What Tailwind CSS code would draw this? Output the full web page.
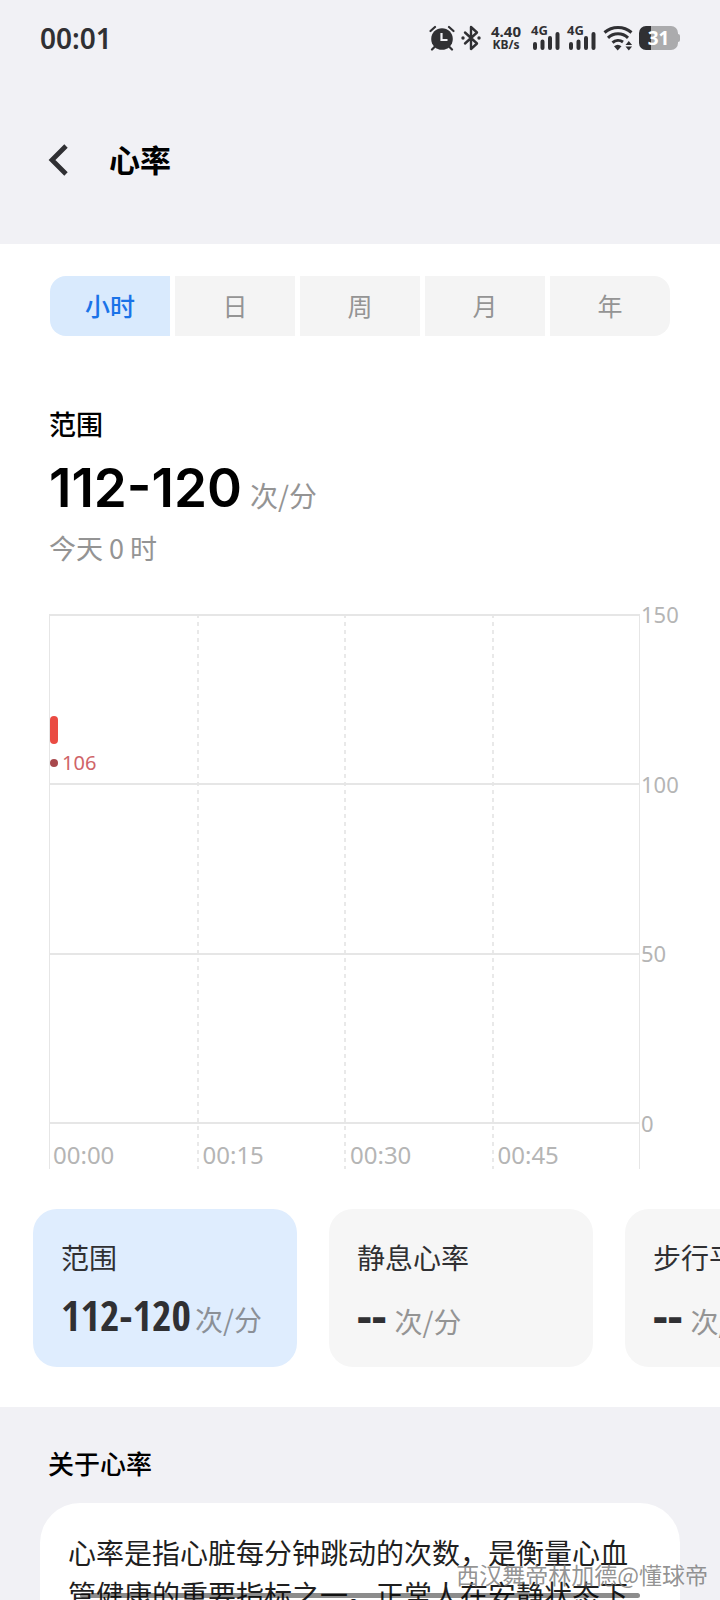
<!DOCTYPE html>
<html lang="zh-CN">
<head>
<meta charset="utf-8">
<title>心率</title>
<meta name="viewport" content="width=device-width, initial-scale=1">
<script src="https://cdn.jsdelivr.net/npm/@tailwindcss/browser@4"></script>
</head>
<body class="bg-white font-['Noto_Sans_CJK_SC',sans-serif] text-black">
<div class="relative flex h-screen flex-col overflow-hidden">

  <header class="shrink-0 bg-[#f1f1f5] text-[#303033]">
    <!-- Status bar -->
    <div class="flex h-[76px] items-center justify-between px-10 font-['Noto_Sans',sans-serif]">
      <time class="text-[28px] leading-8 font-semibold">00:01</time>
      <div class="flex items-center">
        <svg class="h-7 w-[26px]" viewBox="0 0 26 28" role="img" aria-label="闹钟">
          <circle cx="13" cy="15" r="10.800" fill="currentColor"/>
          <path d="M1.500 7 6 3M24.500 7 20 3M5.500 23l-2.500 2.500M20.500 23l2.500 2.500" stroke="currentColor" stroke-width="2.200" stroke-linecap="round" fill="none"/>
          <path d="M12.500 9v7h6" stroke="#f1f1f5" stroke-width="2.200" fill="none"/>
        </svg>
        <svg class="ml-1.5 h-7 w-5" viewBox="0 0 20 28" role="img" aria-label="蓝牙">
          <path d="M4 8.500l12 11-6 5.500V3l6 5.500-12 11" stroke="currentColor" stroke-width="2.400" stroke-linejoin="round" stroke-linecap="round" fill="none"/>
          <circle cx="2" cy="14" r="1.700" fill="currentColor"/><circle cx="18" cy="14" r="1.700" fill="currentColor"/>
        </svg>
        <div class="ml-2.5 flex flex-col items-center leading-[14px] font-bold"><span class="text-[15px]">4.40</span><span class="text-[12px]">KB/s</span></div>
        <svg class="ml-2.5 h-7 w-[29px] overflow-visible" viewBox="0 0 29 28" role="img" aria-label="4G 信号">
          <text x="0" y="11" font-size="13" font-weight="700" fill="currentColor">4G</text>
          <path d="M4 20v4M11.500 17.500v6.500M19 14v10M26.500 10v14" stroke="currentColor" stroke-width="4" stroke-linecap="round"/>
        </svg>
        <svg class="ml-[7px] h-7 w-[29px] overflow-visible" viewBox="0 0 29 28" role="img" aria-label="4G 信号">
          <text x="0" y="11" font-size="13" font-weight="700" fill="currentColor">4G</text>
          <path d="M4 20v4M11.500 17.500v6.500M19 14v10M26.500 10v14" stroke="currentColor" stroke-width="4" stroke-linecap="round"/>
        </svg>
        <svg class="ml-[7px] h-7 w-[30px]" viewBox="0 0 30 28" role="img" aria-label="无线网络">
          <path d="M1.500 8.500a20.500 20.500 0 0 1 27 0M5 13.800a14.500 14.500 0 0 1 20 0M9.500 18.600a8.500 8.500 0 0 1 10.500-.6" stroke="currentColor" stroke-width="3" fill="none"/>
          <path d="M11 22.200a6 6 0 0 1 7.500 0L14.700 26.500z" fill="currentColor"/>
          <path d="M22.500 21l3.300-4 3.300 4zM22.500 22.500l3.300 4 3.300-4z" fill="currentColor"/>
        </svg>
        <div class="ml-1.5 flex items-center" role="img" aria-label="电量 31%">
          <div class="flex h-6 w-[39px] items-center justify-center rounded-[7px] bg-linear-to-r from-[#303033] from-31% to-[#ababad] to-31% text-[19px] leading-6 font-bold text-white">31</div>
          <div class="h-2 w-0.5 rounded-r-full bg-[#ababad]"></div>
        </div>
      </div>
    </div>
    <!-- Title bar -->
    <div class="flex h-[168px] items-center gap-10 px-12">
      <button type="button" aria-label="返回" class="flex h-8 w-5 items-center justify-center">
        <svg class="h-8 w-5" viewBox="0 0 20 32" aria-hidden="true"><path d="M18 2 4 16l14 14" stroke="currentColor" stroke-width="4.800" fill="none"/></svg>
      </button>
      <h1 class="pb-0.5 pl-px text-[31px] leading-10 font-bold text-black">心率</h1>
    </div>
  </header>

  <main class="shrink-0">
    <nav class="mx-[50px] mt-8 grid grid-cols-5 gap-[5px] overflow-hidden rounded-2xl text-[25px] leading-8 text-[#949494]" aria-label="时间范围">
      <button type="button" aria-pressed="true" class="h-15 bg-[#d9eafd] pb-0.5 font-medium text-[#1a73e8]">小时</button>
      <button type="button" class="h-15 bg-[#f4f4f4] pb-0.5">日</button>
      <button type="button" class="h-15 bg-[#f4f4f4] pb-0.5">周</button>
      <button type="button" class="h-15 bg-[#f4f4f4] pb-0.5">月</button>
      <button type="button" class="h-15 bg-[#f4f4f4] pb-0.5">年</button>
    </nav>

    <section class="mt-[72px] px-[49px]">
      <h2 class="text-[27px] leading-8 font-medium">范围</h2>
      <p class="mt-4 flex items-baseline gap-2">
        <span class="font-['Inter',sans-serif] text-[53px] leading-16 font-semibold">112-120</span>
        <span class="text-[28px] leading-8 text-[#949494]">次/分</span>
      </p>
      <p class="mt-3 text-[27px] leading-8 text-[#949494]">今天 0 时</p>
    </section>

    <!-- Heart-rate chart, 0 to 150 -->
    <section class="mt-[50px] mr-10 ml-[49px] flex font-['Noto_Sans',sans-serif] text-[24px] leading-6 text-[#b5b5b5]" aria-label="心率图表">
      <div class="relative h-[555px] flex-1 border-x border-[#e6e6e6]">
        <div class="absolute inset-x-0 top-0 flex h-[510px] flex-col border-y-2 border-[#e6e6e6]">
          <div class="flex-1 border-b-2 border-[#e6e6e6]"></div>
          <div class="flex-1 border-b-2 border-[#e6e6e6]"></div>
          <div class="flex-1"></div>
        </div>
        <div class="-ml-px grid h-full grid-cols-4">
          <div class="flex items-end pb-0.5 pl-1">00:00</div>
          <div class="flex items-end bg-[repeating-linear-gradient(#e9e9e9_0_4px,transparent_4px_8px)] bg-[length:2px_100%] bg-no-repeat pb-0.5 pl-1.5">00:15</div>
          <div class="flex items-end bg-[repeating-linear-gradient(#e9e9e9_0_4px,transparent_4px_8px)] bg-[length:2px_100%] bg-no-repeat pb-0.5 pl-1.5">00:30</div>
          <div class="flex items-end bg-[repeating-linear-gradient(#e9e9e9_0_4px,transparent_4px_8px)] bg-[length:2px_100%] bg-no-repeat pb-0.5 pl-1.5">00:45</div>
        </div>
        <div class="absolute top-[102px] left-0 h-7 w-2 rounded-full bg-[#ea4b43]"></div>
        <div class="absolute top-[137px] left-0 flex items-center gap-1 text-[20px] text-[#cf6468]">
          <span class="size-2 rounded-full bg-[#a8484c]"></span>106
        </div>
      </div>
      <div class="-mt-3 flex h-[533px] w-10 flex-col justify-between pl-px text-[22px]">
        <span>150</span><span>100</span><span>50</span><span>0</span>
      </div>
    </section>

    <section class="mt-10 flex gap-8 overflow-hidden pb-10 pl-[33px] text-[28px] leading-8 text-[#303033]">
      <button type="button" aria-pressed="true" class="w-[264px] shrink-0 rounded-3xl bg-[#dfedfe] px-7 pt-8 pb-7 text-left">
        <span class="block">范围</span>
        <span class="mt-[18px] flex h-12 items-baseline gap-1"><b class="font-['Open_Sans_Condensed','Roboto_Condensed',sans-serif] text-[42px] leading-12 font-bold">112-120</b><span class="text-[#8b9097]">次/分</span></span>
      </button>
      <button type="button" class="w-[264px] shrink-0 rounded-3xl bg-[#f6f6f6] px-7 pt-8 pb-7 text-left">
        <span class="block">静息心率</span>
        <span class="mt-[18px] flex h-12 items-baseline gap-2"><b class="font-['Noto_Sans',sans-serif] text-[46px] leading-12 font-bold">--</b><span class="text-[#949494]">次/分</span></span>
      </button>
      <button type="button" class="w-[264px] shrink-0 rounded-3xl bg-[#f6f6f6] px-7 pt-8 pb-7 text-left">
        <span class="block">步行平均心率</span>
        <span class="mt-[18px] flex h-12 items-baseline gap-2"><b class="font-['Noto_Sans',sans-serif] text-[46px] leading-12 font-bold">--</b><span class="text-[#949494]">次/分</span></span>
      </button>
    </section>
  </main>

  <section class="flex-1 bg-[#f1f1f5] px-10 pt-10">
    <h2 class="pl-2 text-[26px] leading-8 font-medium">关于心率</h2>
    <p class="mt-6 h-60 rounded-[40px] bg-white px-7 pt-7 text-[28px] leading-[42px] text-[#1f1f1f]">心率是指心脏每分钟跳动的次数，是衡量心血管健康的重要指标之一。正常人在安静状态下</p>
  </section>

  <!-- Home indicator and watermark -->
  <div class="absolute bottom-0.5 left-1/2 h-[5px] w-[560px] -translate-x-1/2 rounded-full bg-black/45"></div>
  <div class="absolute right-3 bottom-2.5 text-[23px] leading-8 text-[#777777]/80">西汉舞帝林加德@懂球帝</div>
</div>
</body>
</html>
